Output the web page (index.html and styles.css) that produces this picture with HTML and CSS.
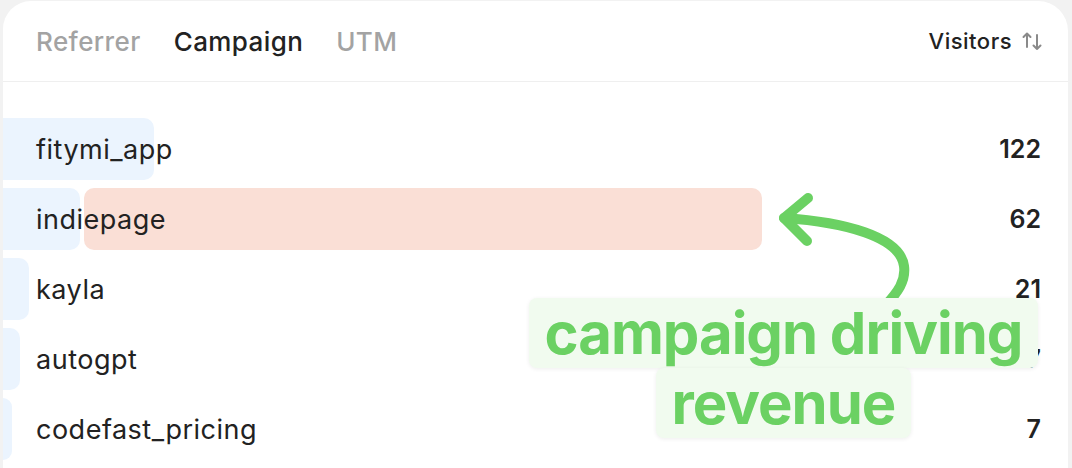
FILE: index.html
```html
<!DOCTYPE html>
<html lang="en">
<head>
    <meta charset="UTF-8">
    <meta name="viewport" content="width=device-width, initial-scale=1.0">
    <title>Campaign Visitors</title>
    <link rel="stylesheet" href="styles.css">
</head>
<body>

    <div class="card">
        <div class="card-header">
            <div class="tabs">
                <span class="tab">Referrer</span>
                <span class="tab active">Campaign</span>
                <span class="tab">UTM</span>
            </div>
            <div class="sort">
                Visitors
                <svg class="sort-icon" width="22" height="22" viewBox="0 0 22 22" fill="none" stroke="#8a8a8a" stroke-width="2" stroke-linecap="round" stroke-linejoin="round">
                    <path d="M5 17V3.5M1.5 7L5 3.5L8.5 7"/>
                    <path d="M15 5V19M11.5 15.5L15 19L18.5 15.5"/>
                </svg>
            </div>
        </div>

        <div class="rows">
            <div class="row">
                <div class="bars"><div class="bar" style="width:151px"></div></div>
                <div class="row-content"><span class="label">fitymi_app</span><span class="count">122</span></div>
            </div>
            <div class="row">
                <div class="bars">
                    <div class="bar" style="width:77px"></div>
                    <div class="bar revenue" style="width:678px"></div>
                </div>
                <div class="row-content"><span class="label">indiepage</span><span class="count">62</span></div>
            </div>
            <div class="row">
                <div class="bars"><div class="bar" style="width:26px"></div></div>
                <div class="row-content"><span class="label">kayla</span><span class="count">21</span></div>
            </div>
            <div class="row">
                <div class="bars"><div class="bar" style="width:17px"></div></div>
                <div class="row-content"><span class="label">autogpt</span><span class="count">17</span></div>
            </div>
            <div class="row">
                <div class="bars"><div class="bar" style="width:9px"></div></div>
                <div class="row-content"><span class="label">codefast_pricing</span><span class="count">7</span></div>
            </div>
        </div>

        <!-- annotation drawn over the list -->
        <svg class="arrow" width="1065" height="468" viewBox="0 0 1065 468" fill="none" stroke="#6bd163" stroke-width="10" stroke-linecap="round" stroke-linejoin="round">
            <path d="M781 218C840 222 897 236 901 266C903 281 895 292 882 306"/>
            <path d="M805 198L781 218L804 241"/>
        </svg>
        <div class="callout">
            <span class="callout-line">campaign driving</span>
            <span class="callout-line">revenue</span>
        </div>
    </div>

</body>
</html>
```

FILE: styles.css
```css
body {
    font-family: Inter, "Open Sans", sans-serif;
    background-color: #f2f2f2;
    margin: 0;
    padding: 1px 4px 0 3px;
    height: 100vh;
    box-sizing: border-box;
    overflow: hidden;
    color: #222;
}
.card {
    position: relative;
    background-color: white;
    border-radius: 28px 30px 0 0;
    height: 100%;
    overflow: hidden;
}
.card-header {
    height: 80px;
    border-bottom: 1px solid #efefef;
    display: flex;
    align-items: center;
    justify-content: space-between;
    padding: 0 24px 0 33px;
}
.tabs {
    display: flex;
    gap: 33px;
}
.tab {
    font-size: 26px;
    font-weight: 500;
    color: #a3a3a3;
    letter-spacing: 0.4px;
}
.tab.active {
    color: #222;
}
.sort {
    display: flex;
    align-items: center;
    gap: 10px;
    font-size: 22px;
    font-weight: 500;
    letter-spacing: 0.5px;
}
.sort-icon {
    display: block;
}
.rows {
    padding-top: 36px;
    display: flex;
    flex-direction: column;
    gap: 8px;
}
.row {
    display: grid;
    height: 62px;
}
.bars, .row-content {
    grid-area: 1 / 1;
}
.bars {
    display: flex;
    gap: 4px;
}
.bar {
    background-color: #ebf4fe;
    border-radius: 0 10px 10px 0;
}
.bar.revenue {
    background-color: #fadfd6;
    border-radius: 10px;
}
.row-content {
    display: flex;
    align-items: center;
    justify-content: space-between;
    padding: 0 27px 0 33px;
    font-size: 27px;
}
.label {
    letter-spacing: 0.5px;
}
.count {
    font-size: 25px;
    font-weight: 600;
}
.arrow {
    position: absolute;
    left: 0;
    top: -1px;
}
.callout {
    position: absolute;
    left: 524px;
    top: 297px;
    width: 513px;
    display: flex;
    flex-direction: column;
    align-items: center;
}
.callout-line {
    background-color: #f1fbef;
    color: #6bd163;
    font-size: 58px;
    font-weight: 700;
    letter-spacing: -1px;
    line-height: 70px;
    padding: 0 16px;
    border-radius: 8px;
    box-shadow: 0 1px 4px rgba(0, 0, 0, 0.07);
}
```
